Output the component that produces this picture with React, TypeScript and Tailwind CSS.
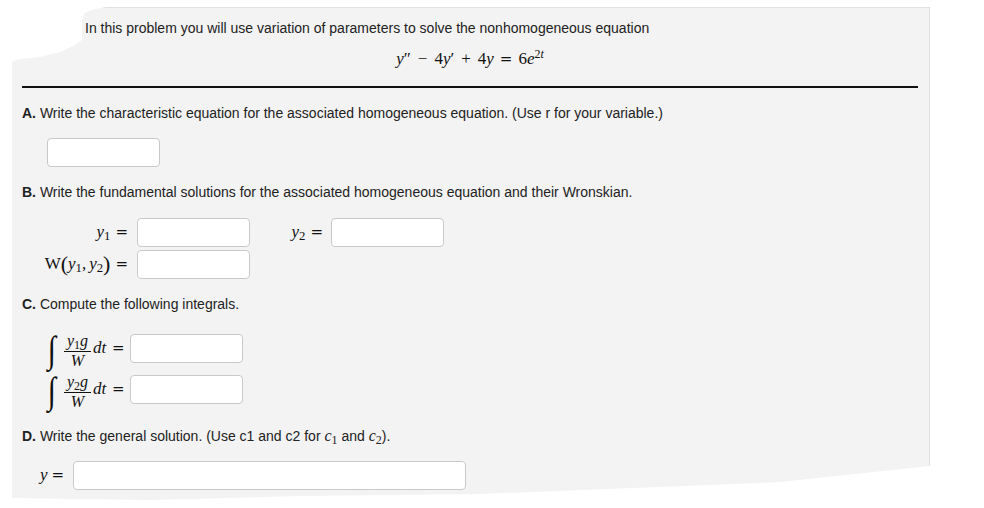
const serif = "font-['Liberation_Serif','DejaVu_Serif',serif]"

function Box({ w }: { w: string }) {
  return <div className={`${w} h-[29px] shrink-0 rounded-[4px] border border-[#c9c9c9] bg-white`} />
}

function Y({ n }: { n?: number }) {
  return (
    <span>
      <i>y</i>
      {n ? <sub className="not-italic">{n}</sub> : null}
    </span>
  )
}

function Integral({ n }: { n: number }) {
  return (
    <div className={`flex h-[29px] items-center ${serif} text-[17px] text-[#111]`}>
      <span className="ml-[19px] flex h-[29px] w-[21px] shrink-0 items-center justify-center">
        <span className="inline-block origin-center translate-y-[1px] scale-y-[1.25] text-[30px] italic leading-none">∫</span>
      </span>
      <span className="ml-[2px] inline-block w-[27px] shrink-0 translate-y-[2px] text-[16px]">
        <span className="block h-[17px] text-center leading-[14px]">
          <i>y</i>
          <sub className="leading-none">{n}</sub>
          <i>g</i>
        </span>
        <span className="block h-[15px] border-t border-[#111] pt-[1px] text-center leading-[15px]">
          <i>W</i>
        </span>
      </span>
      <span className="ml-[2px] w-[18px] shrink-0 italic">dt</span>
      <span className="ml-[1px] shrink-0 font-['DejaVu_Serif',serif] text-[15px]">=</span>
      <div className="ml-[5px]">
        <Box w="w-[113px]" />
      </div>
    </div>
  )
}

function Eq({ cls }: { cls: string }) {
  return <span className={`${cls} font-['DejaVu_Serif',serif] text-[15px]`}>=</span>
}

export default function App() {
  return (
    <div className="h-[508px] w-[984px] overflow-hidden bg-white font-['Liberation_Sans',Arial,sans-serif] text-[14px] leading-[16px] text-[#222]">
      <div className="ml-[12px] mt-[7px] h-[494px] w-[918px] border-r border-t border-[#e1e1e1] bg-[#f3f3f3] [clip-path:polygon(95px_0,100%_0,100%_459px,768px_475px,468px_487px,288px_489px,138px_493px,0_491px,0_55px,8px_52px,28px_50px,48px_45px,63px_38px,70px_33px,70px_13px,73px_6px,83px_2px)]">
        <div className="pl-[10px] pr-[11px] pt-[12px]">
          <div className="pl-[63px]">In this problem you will use variation of parameters to solve the nonhomogeneous equation</div>

          <div className={`mt-[13px] h-[20px] text-center text-[17px] leading-[20px] text-[#111] ${serif}`}>
            <i>y</i>″<span className="mx-[7px]">−</span>4<i>y</i>′<span className="mx-[7px]">+</span>4<i>y</i>
            <Eq cls="mx-[6px]" />6<i>e</i>
            <sup className="text-[12px]">
              2<i>t</i>
            </sup>
          </div>

          <div className="mt-[17px] h-[1.5px] bg-[#111]" />

          <div className="mt-[17px]">
            <b>A.</b> Write the characteristic equation for the associated homogeneous equation. (Use r for your variable.)
          </div>
          <div className="ml-[25px] mt-[17px]">
            <Box w="w-[113px]" />
          </div>

          <div className="mt-[17px]">
            <b>B.</b> Write the fundamental solutions for the associated homogeneous equation and their Wronskian.
          </div>

          <div className={`mt-[18px] text-[17px] text-[#111] ${serif}`}>
            <div className="flex items-center">
              <div className="w-[106px] text-right">
                <Y n={1} />
                <Eq cls="ml-[5px]" />
              </div>
              <div className="ml-[9px]">
                <Box w="w-[113px]" />
              </div>
              <div className="w-[73px] text-right">
                <Y n={2} />
                <Eq cls="ml-[5px]" />
              </div>
              <div className="ml-[8px]">
                <Box w="w-[113px]" />
              </div>
            </div>
            <div className="mt-[3px] flex items-center">
              <div className="flex w-[106px] items-center justify-end">
                <span>W</span>
                <span className="text-[22px] leading-none">(</span>
                <Y n={1} />
                <span className="mr-[3px]">,</span>
                <Y n={2} />
                <span className="text-[22px] leading-none">)</span>
                <Eq cls="ml-[5px]" />
              </div>
              <div className="ml-[9px]">
                <Box w="w-[113px]" />
              </div>
            </div>
          </div>

          <div className="mt-[17px]">
            <b>C.</b> Compute the following integrals.
          </div>
          <div className="mt-[22px]">
            <Integral n={1} />
          </div>
          <div className="mt-[12px]">
            <Integral n={2} />
          </div>

          <div className="mt-[24px]">
            <b>D.</b> Write the general solution. (Use c1 and c2 for{' '}
            <span className={`text-[16px] ${serif}`}>
              <i>c</i>
              <sub>1</sub>
            </span>{' '}
            and{' '}
            <span className={`text-[16px] ${serif}`}>
              <i>c</i>
              <sub>2</sub>
            </span>
            ).
          </div>

          <div className={`mt-[17px] flex items-center text-[17px] text-[#111] ${serif}`}>
            <div className="w-[46px] pl-[18px]">
              <i>y</i>
              <Eq cls="ml-[4px]" />
            </div>
            <div className="ml-[5px]">
              <Box w="w-[393px]" />
            </div>
          </div>
        </div>
      </div>
    </div>
  )
}
